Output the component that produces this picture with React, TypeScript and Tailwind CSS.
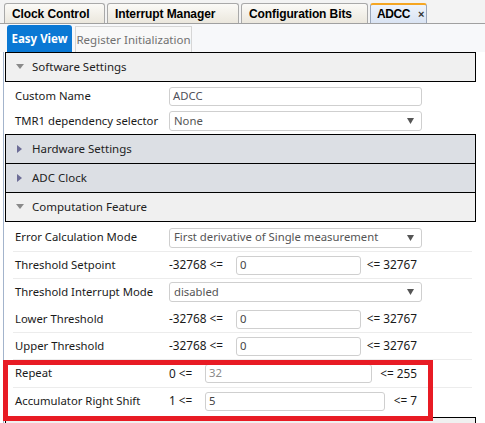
import React from "react";

const font = { fontFamily: '"Noto Sans", "Open Sans", sans-serif' };
const tahoma = { fontFamily: '"Liberation Sans", Arial, sans-serif' };

function TopTab({ label, w, active }: { label: string; w: number; active?: boolean }) {
  return (
    <div
      style={{ width: w }}
      className={
        "h-[20px] mr-[2px] flex items-center rounded-t-[3px] border border-b-0 text-[12px] font-bold text-black whitespace-nowrap " +
        (active
          ? "border-[#9aa7bb] border-t-2 border-t-[#f5a623] bg-gradient-to-b from-[#eef3fb] to-[#d9e3f2] pl-[6px]"
          : "border-[#a9a9a9] bg-gradient-to-b from-[#fbfaf7] to-[#ebe7dd] pl-[7px]")
      }
    >
      <span style={tahoma} className={active ? "tracking-[-0.4px]" : "tracking-[-0.1px]"}>
        {label}
      </span>
      {active && (
        <span className="ml-[8px] text-[11px] font-bold text-[#333]" style={tahoma}>
          ×
        </span>
      )}
    </div>
  );
}

function Header({ label, open, shade }: { label: string; open?: boolean; shade?: boolean }) {
  return (
    <div
      className={
        "h-[30px] -mt-px flex items-center border border-black pl-[10px] text-[11.5px] text-[#222] " +
        (shade ? "bg-[#dcdfe4]" : "bg-[#f0f0f0]")
      }
    >
      {open ? (
        <svg width="8" height="6" viewBox="0 0 8 6" className="mr-[8px]">
          <path d="M0 0 L8 0 L4 5 Z" fill="#8a8a8a" />
        </svg>
      ) : (
        <svg width="8" height="8" viewBox="0 0 8 8" className="mr-[8px]">
          <path d="M1 0 L6 4 L1 8 Z" fill="#6c6c96" />
        </svg>
      )}
      <span>{label}</span>
    </div>
  );
}

function Input({ value, color = "#555", className = "" }: { value: string; color?: string; className?: string }) {
  return (
    <div
      className={"h-[19px] border border-[#cfcfcf] rounded-[3px] bg-white flex items-center pl-[3px] text-[11.3px] " + className}
      style={{ color }}
    >
      {value}
    </div>
  );
}

function Select({ value }: { value: string }) {
  return (
    <div className="h-[20px] w-[253px] border border-[#cfcfcf] rounded-[3px] bg-white flex items-center pl-[4px] pr-[7px] text-[11.3px] text-[#555]">
      <span className="flex-1">{value}</span>
      <svg width="7" height="6" viewBox="0 0 7 6">
        <path d="M0 0 L7 0 L3.5 6 Z" fill="#555" />
      </svg>
    </div>
  );
}

function Row({
  label,
  children,
  sep = true,
  h = 27,
}: {
  label: string;
  children: React.ReactNode;
  sep?: boolean;
  h?: number;
}) {
  return (
    <div
      style={{ height: h }}
      className={"flex items-center ml-[8px] mr-[4px] " + (sep ? "border-b border-[#ececec]" : "border-b border-transparent")}
    >
      <div className="w-[156px] pl-[2px] text-[11.3px] text-[#1a1a1a] whitespace-nowrap">{label}</div>
      {children}
    </div>
  );
}

function Range({
  min,
  max,
  value,
  preW,
  postPad,
  color,
}: {
  min: string;
  max: string;
  value: string;
  preW: number;
  postPad: number;
  color?: string;
}) {
  return (
    <div className="w-[253px] flex items-center text-[11.8px] text-[#1a1a1a]">
      <span style={{ width: preW }} className="shrink-0 whitespace-nowrap">
        {min}
      </span>
      <Input value={value} color={color} className="flex-1" />
      <span style={{ paddingLeft: postPad }} className="shrink-0 pr-[5px] whitespace-nowrap">
        {max}
      </span>
    </div>
  );
}

export default function App() {
  return (
    <div className="relative w-[485px] h-[423px] overflow-hidden bg-white" style={font}>
      {/* top tabs */}
      <div className="h-[24px] flex items-end pl-[4px] bg-[#f3f3f3] border-b border-[#a0a0a0]">
        <TopTab label="Clock Control" w={101} />
        <TopTab label="Interrupt Manager" w={132} />
        <TopTab label="Configuration Bits" w={127} />
        <TopTab label="ADCC" w={57} active />
      </div>
      {/* sub tabs */}
      <div className="h-[28px] flex items-end pl-[7px] bg-[#f7f8fa]">
        <div className="h-[27px] w-[65px] rounded-t-[3px] bg-[#0a78d4] text-white text-[11.5px] font-bold flex items-center justify-center whitespace-nowrap">
          Easy View
        </div>
        <div className="h-[26px] w-[117px] ml-[3px] border border-b-0 border-[#d6d6d6] bg-[#f8f8f8] text-[#707070] text-[11.5px] flex items-center justify-center whitespace-nowrap">
          Register Initialization
        </div>
      </div>
      {/* content */}
      <div className="flex">
        <div className="w-[4px] border-r border-[#a3b4cc]" />
        <div className="w-[471px] ml-[1px] pt-px">
          <Header label="Software Settings" open />
          <div className="pt-[2px] pb-[1px]">
            <Row label="Custom Name" sep={false} h={25}>
              <Input value="ADCC" color="#50505a" className="w-[253px]" />
            </Row>
            <Row label="TMR1 dependency selector" sep={false} h={25}>
              <Select value="None" />
            </Row>
          </div>
          <Header label="Hardware Settings" shade />
          <Header label="ADC Clock" shade />
          <Header label="Computation Feature" open />
          <div className="pt-[2px]">
            <Row label="Error Calculation Mode" h={28}>
              <Select value="First derivative of Single measurement" />
            </Row>
            <Row label="Threshold Setpoint">
              <Range min="-32768 <=" max="<= 32767" value="0" preW={67} postPad={6} color="#444" />
            </Row>
            <Row label="Threshold Interrupt Mode" sep={false}>
              <Select value="disabled" />
            </Row>
            <Row label="Lower Threshold">
              <Range min="-32768 <=" max="<= 32767" value="0" preW={67} postPad={6} color="#444" />
            </Row>
            <Row label="Upper Threshold">
              <Range min="-32768 <=" max="<= 32767" value="0" preW={67} postPad={6} color="#444" />
            </Row>
            <Row label="Repeat" h={28}>
              <Range min="0 <=" max="<= 255" value="32" preW={36} postPad={8} color="#8a8a8a" />
            </Row>
            <Row label="Accumulator Right Shift" sep={false}>
              <Range min="1 <=" max="<= 7" value="5" preW={36} postPad={9} color="#444" />
            </Row>
          </div>
          <div className="mt-[2px]">
            <div className="h-[30px] border border-black bg-[#f0f0f0]" />
          </div>
        </div>
      </div>
      {/* annotation */}
      <div className="absolute left-[3px] top-[360px] w-[430px] h-[61px] border-[5px] border-[#e81b24]" />
    </div>
  );
}
